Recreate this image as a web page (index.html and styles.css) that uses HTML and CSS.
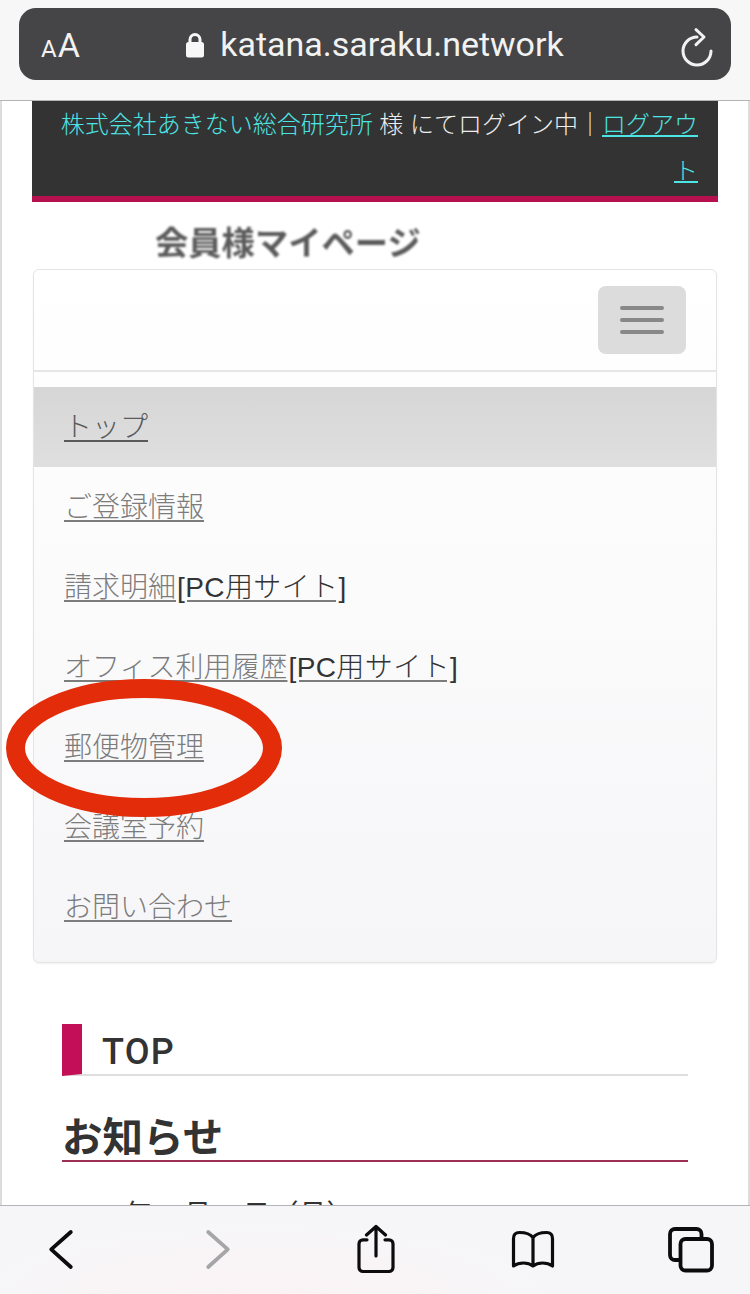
FILE: index.html
```html
<!DOCTYPE html>
<html lang="ja">
<head>
<meta charset="utf-8">
<title>会員様マイページ</title>
<link rel="stylesheet" href="styles.css">
</head>
<body>
<div class="app">
  <header class="browser-top">
    <div class="address">
      <div class="aa"><span class="aa-small">A</span><span class="aa-big">A</span></div>
      <div class="url">
        <svg class="lock" viewBox="0 0 18 26" width="18" height="26"><path class="lock-arc" d="M4 12V7.5a5 5 0 0 1 10 0V12"/><rect class="lock-body" x="0" y="10" width="18" height="15.5" rx="2.5"/></svg>
        <span class="url-text">katana.saraku.network</span>
      </div>
      <svg class="reload" viewBox="0 0 36 42" width="36" height="42"><path d="M31 24A14 14 0 1 1 17 10M16 2.7L24 10L16 17.7"/></svg>
    </div>
  </header>
  <main class="page">
    <div class="login-bar">
      <a class="login-company" href="#">株式会社あきない総合研究所</a> 様 にてログイン中｜<a class="login-out" href="#">ログアウト</a>
    </div>
    <div class="logo">会員様マイページ</div>
    <nav class="card">
      <div class="card-head">
        <button class="toggle" type="button"><span class="bar"></span><span class="bar"></span><span class="bar"></span></button>
      </div>
      <ul class="menu">
        <li class="menu-item active"><a href="#">トップ</a></li>
        <li class="menu-item"><a href="#">ご登録情報</a></li>
        <li class="menu-item"><a href="#">請求明細<span class="dark">[PC用サイト]</span></a></li>
        <li class="menu-item"><a href="#">オフィス利用履歴<span class="dark">[PC用サイト]</span></a></li>
        <li class="menu-item"><a href="#">郵便物管理</a></li>
        <li class="menu-item"><a href="#">会議室予約</a></li>
        <li class="menu-item"><a href="#">お問い合わせ</a></li>
      </ul>
    </nav>
    <section class="content">
      <h2 class="page-title">TOP</h2>
      <h3 class="sub-title">お知らせ</h3>
      <p class="date">2019年10月07日（月）</p>
    </section>
    <svg class="circle-mark" viewBox="0 0 276 138" width="276" height="138"><ellipse cx="138" cy="69" rx="128.5" ry="59.5"/></svg>
  </main>
  <footer class="browser-bottom">
    <svg class="tool" viewBox="0 0 50 50" width="50" height="50"><path d="M34.8 7L15.2 24.3L34.8 42"/></svg>
    <svg class="tool tool-off" viewBox="0 0 50 50" width="50" height="50"><path d="M15.2 7L34.8 24.3L15.2 42"/></svg>
    <svg class="tool tool-thin" viewBox="0 0 50 50" width="50" height="50"><path d="M16 14.8H12a4 4 0 0 0-4 4V42.500a4 4 0 0 0 4 4h26a4 4 0 0 0 4-4V18.8a4 4 0 0 0-4-4H34M25 31V1.500M15.500 10L25 1.500L34.500 10"/></svg>
    <svg class="tool tool-thin" viewBox="0 0 50 50" width="50" height="50"><path d="M5.500 41C11 37 20 37 25 41C30 37 39 37 44.500 41V13.500C44.500 10 42.500 7.500 38.500 7.500C34 7.500 28 8.500 25 12.500C22 8.500 16 7.500 11.500 7.500C7.500 7.500 5.500 10 5.500 13.500ZM25 12.500V41"/></svg>
    <svg class="tool tool-tabs" viewBox="0 0 50 50" width="50" height="50"><rect x="4" y="4" width="31.500" height="31" rx="5"/><rect x="14.500" y="14" width="31.500" height="31.500" rx="5"/></svg>
  </footer>
</div>
</body>
</html>
```
FILE: styles.css
```css
* { box-sizing: border-box; }
html, body { margin: 0; padding: 0; }
body {
  font-family: "Liberation Sans", "Noto Sans CJK JP", sans-serif;
  color: #333;
  background: #fff;
}
.app {
  width: 750px;
  height: 1294px;
  display: flex;
  flex-direction: column;
  overflow: hidden;
}

/* browser chrome, top */
.browser-top {
  flex: 0 0 101px;
  padding: 8px 19px 0;
  background: #f7f7f8;
  border-bottom: 1px solid #b4b4b6;
}
.address {
  height: 72px;
  border-radius: 17px;
  background: #454547;
  color: #f2f2f2;
  display: grid;
  grid-template-columns: 1fr auto 1fr;
  align-items: center;
}
.aa {
  padding: 2px 0 0 22px;
  display: flex;
  align-items: baseline;
  line-height: 1;
  font-family: Roboto, sans-serif;
}
.aa-small { font-size: 24px; }
.aa-big { font-size: 34px; margin-left: 1px; }
.url { display: flex; align-items: center; gap: 16px; }
.lock { display: block; margin-top: 1px; }
.lock-arc { fill: none; stroke: #f7f7f7; stroke-width: 3; }
.lock-body { fill: #f7f7f7; }
.url-text { font-family: Roboto, sans-serif; font-size: 34px; line-height: 1; }
.reload {
  justify-self: end;
  margin-right: 15px;
  margin-top: 8px;
  fill: none;
  stroke: #f2f2f2;
  stroke-width: 3;
  stroke-linecap: round;
  stroke-linejoin: round;
}

/* page */
.page {
  flex: 1 1 auto;
  min-height: 0;
  position: relative;
  overflow: hidden;
  padding: 0 30px;
  border-left: 2px solid #dcdcdc;
  border-right: 2px solid #dcdcdc;
}
.login-bar {
  height: 101px;
  padding: 1px 20px 0;
  background: #333;
  border-bottom: 6px solid #b7104f;
  color: #eee;
  font-size: 24px;
  line-height: 46px;
  text-align: right;
  font-weight: 300;
}
.login-company { color: #4de4e4; text-decoration: none; }
.login-out { color: #4de4e4; text-decoration: underline; }
.logo {
  height: 67px;
  padding: 22px 0 0 123px;
  font-size: 33.3px;
  line-height: 40px;
  font-weight: 700;
  color: #5a5a5a;
  filter: blur(0.9px);
}

/* nav card */
.card {
  margin: 0 1px;
  height: 694px;
  border: 1px solid #e4e4e4;
  border-radius: 6px;
  background: linear-gradient(#ffffff, #f6f6f8);
  box-shadow: 0 1px 2px rgba(0, 0, 0, 0.06);
}
.card-head {
  height: 102px;
  padding: 16px 30px 0 0;
  border-bottom: 2px solid #e6e6e6;
  display: flex;
  justify-content: flex-end;
  align-items: flex-start;
}
.toggle {
  width: 88px;
  height: 68px;
  padding: 0;
  border: 0;
  border-radius: 8px;
  background: #dcdcdc;
  display: flex;
  flex-direction: column;
  align-items: center;
  justify-content: center;
  gap: 8px;
}
.bar { width: 44px; height: 4px; border-radius: 2px; background: #888; }
.menu { list-style: none; margin: 0; padding: 15px 0; }
.menu-item {
  height: 80px;
  padding: 0 0 4px 30px;
  display: flex;
  align-items: center;
  font-size: 28px;
  font-weight: 300;
}
.menu-item a { color: #7c7c7c; text-decoration: underline; text-underline-offset: 3px; }
.menu-item .dark { color: #333; letter-spacing: 0.4px; margin-left: 1px; }
.menu-item.active {
  background: linear-gradient(#d6d6d6, #dfdfdf);
}
.menu-item.active a { color: #5a5a5a; }

/* content */
.content { margin-top: 61px; padding: 0 30px; }
.page-title {
  margin: 0;
  height: 52px;
  padding: 9px 0 0 20px;
  border-left: 20px solid #c20f57;
  border-bottom: 2px solid #dedede;
  font-family: Roboto, sans-serif;
  font-size: 36px;
  line-height: 38px;
  font-weight: 500;
  letter-spacing: 1.2px;
  color: #333;
}
.sub-title {
  margin: 0;
  height: 86px;
  padding: 38px 0 0;
  border-bottom: 2px solid #9c2f55;
  font-size: 40.500px;
  line-height: 48px;
  font-weight: 700;
  color: #333;
}
.date {
  margin: 34px 0 0;
  font-size: 28px;
  line-height: 40px;
  color: #333;
}

/* annotation over the page */
.circle-mark {
  position: absolute;
  left: 4px;
  top: 578px;
  fill: none;
  stroke: #e22c0a;
  stroke-width: 19;
}

/* browser chrome, bottom */
.browser-bottom {
  flex: 0 0 89px;
  padding: 19px 34.5px 0 35.5px;
  border-top: 1px solid #b4b4b6;
  background: radial-gradient(ellipse 300px 70px at 260px 85px, #fbf3f5, #f6f6f8);
  display: flex;
  justify-content: space-between;
  align-items: flex-start;
}
.tool {
  display: block;
  overflow: visible;
  fill: none;
  stroke: #0c0c0c;
  stroke-width: 3.8;
  stroke-linecap: round;
  stroke-linejoin: round;
}
.tool-off { stroke: #a6a6a9; }
.tool-thin { stroke-width: 3.2; }
.tool-tabs rect { fill: #f6f6f8; }
```
